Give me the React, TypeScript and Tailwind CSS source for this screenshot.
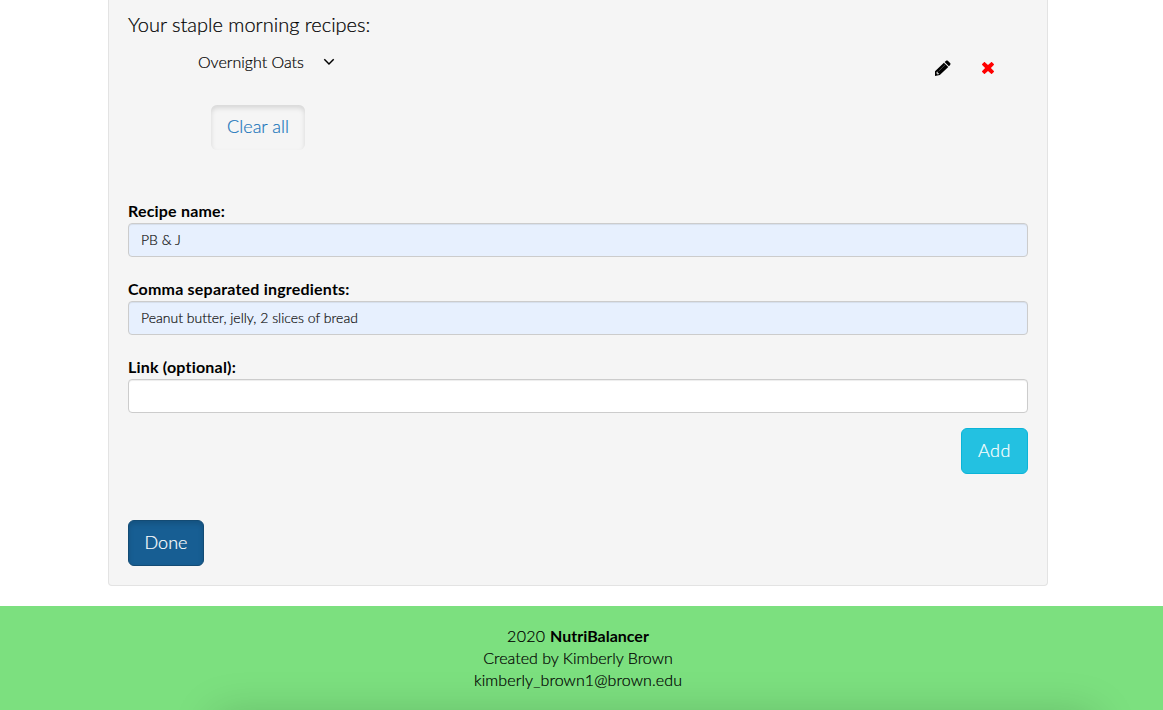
import type { ReactNode } from "react";

const inset = "shadow-[inset_0_1px_1px_rgba(0,0,0,0.075)]";

function Field({ label, value, filled, labelClass }: { label: string; value: string; filled?: boolean; labelClass: string }) {
  return (
    <label className="block h-[78px]">
      <span className={`block h-6 leading-6 text-base font-bold text-black [-webkit-text-stroke:0] ${labelClass}`}>{label}</span>
      <input
        type="text"
        defaultValue={value}
        className={`block h-[34px] w-full rounded border border-[#ccc] px-3 pb-[2px] text-sm font-light text-[#111] outline-none [-webkit-text-stroke:0.2px_#111] ${inset} ${filled ? "bg-[#e7f0fe]" : "bg-white"}`}
      />
    </label>
  );
}

function Button({ className, children }: { className: string; children: ReactNode }) {
  return (
    <button type="button" className={`flex items-center justify-center rounded-md text-lg font-light [-webkit-text-stroke:0.2px_currentColor] ${className}`}>
      {children}
    </button>
  );
}

function Chevron() {
  return (
    <svg width="12" height="8" viewBox="0 0 12 8" fill="none" stroke="#000" strokeWidth="1.5">
      <path d="M1.300 1.300 6 6 10.700 1.300" />
    </svg>
  );
}

function Pencil() {
  return (
    <svg width="16" height="16" viewBox="0 0 16 16">
      <path fill="#000" d="M10.900.9c.6-.6 1.300-.6 1.900-.1l2.300 2.300c.6.6.6 1.200 0 1.800l-1.200 1.300-4.300-4.100zM8.900 2.700l4.400 4.300-8.500 8.100-4.800.900V11.200z" />
      <path stroke="#777" strokeWidth=".6" d="m3.700 11.200 6.400-6.400" />
      <path fill="#f4f4f4" d="m1.500 12.100 1-.5.600 1.300 1.200.5-.6.900-1.200.2-1-1z" opacity=".8" />
    </svg>
  );
}

function Remove() {
  return (
    <svg width="12" height="12" viewBox="0 0 12 12" fill="#f00">
      <path d="M2.900.2 6 3.100 9.100.2c.3-.3.6-.3.900 0l1.800 1.800c.3.300.3.600 0 .900L8.900 6l2.900 3.100c.3.300.3.600 0 .900L10 11.800c-.3.300-.6.300-.9 0L6 8.900l-3.100 2.900c-.3.300-.6.300-.9 0L.2 10c-.3-.3-.3-.6 0-.9L3.100 6 .2 2.900c-.3-.3-.3-.6 0-.9L2 .2c.3-.3.6-.3.900 0z" />
    </svg>
  );
}

export default function App() {
  return (
    <div className="relative flex h-[710px] w-full flex-col overflow-hidden bg-white font-['Lato',sans-serif] font-light text-black [font-variant-ligatures:none] [-webkit-text-stroke:0.2px_currentColor]">
      <main className="ml-[108px] flex h-[586px] w-[940px] shrink-0 flex-col rounded-b border border-t-0 border-[#e3e3e3] bg-[#f5f5f5] px-[19px]">
        <h3 className="mt-[10px] h-7 text-xl leading-7">Your staple morning recipes:</h3>
        <div className="flex h-[46px] justify-between pt-3 pr-[34px] pl-[70px]">
          <div className="flex h-6 items-center gap-[19px]">
            <span className="text-base leading-6">Overnight Oats</span>
            <Chevron />
          </div>
          <div className="mt-[10px] flex h-4 items-center gap-[31px]">
            <button type="button" aria-label="Edit"><Pencil /></button>
            <button type="button" aria-label="Remove"><Remove /></button>
          </div>
        </div>
        <Button className="mt-[21px] ml-[83px] h-[45px] w-[94px] pb-1 text-[#1b75bb] shadow-[inset_0_3px_5px_rgba(0,0,0,0.125)]">Clear all</Button>
        <form className="mt-[49px]">
          <Field label="Recipe name:" value="PB & J" filled labelClass="tracking-[0.19px]" />
          <Field label="Comma separated ingredients:" value="Peanut butter, jelly, 2 slices of bread" filled labelClass="tracking-[0.2px]" />
          <Field label="Link (optional):" value="" labelClass="tracking-[0.2px]" />
        </form>
        <Button className="-mt-[5px] h-[46px] w-[67px] self-end border border-[#0bb4d8] bg-[#23c1e1] pb-[2px] tracking-[0.5px] text-white">Add</Button>
        <Button className="mt-[46px] h-[46px] w-[76px] border border-[#134b74] bg-[#175e93] pb-[2px] text-white shadow-[inset_0_3px_5px_rgba(0,0,0,0.125)]">Done</Button>
      </main>
      <footer className="mt-5 h-[104px] shrink-0 bg-[#7ce07f] pt-[19px] pr-[7px] text-center text-base leading-[22px]">
        <p><span className="tracking-[0.3px]">2020 </span><b className="font-bold [-webkit-text-stroke:0]">NutriBalancer</b></p>
        <p>Created by Kimberly Brown</p>
        <p className="tracking-[0.1px]">kimberly_brown1@brown.edu</p>
      </footer>
      <div className="pointer-events-none absolute top-full right-[68px] left-[215px] h-20 shadow-[0_4px_44px_rgba(0,0,0,0.18)]" />
    </div>
  );
}
